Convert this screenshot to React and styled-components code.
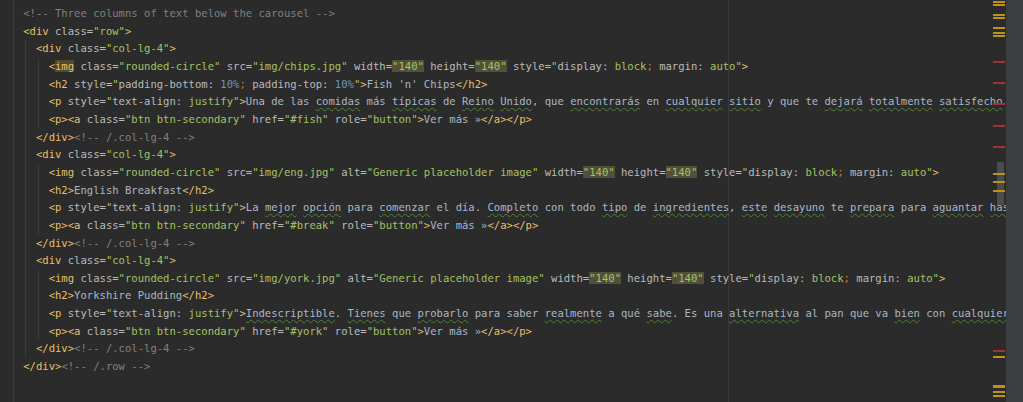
import React from 'react'
import styled, { createGlobalStyle, css } from 'styled-components'


const palette = {
    t: '#e8bf6a',   // tags
    H: '#e8bf6a',
    a: '#bababa',   // attribute names, css props
    v: '#a5c261',   // attribute values
    h: '#a5c261',
    x: '#a9b7c6',   // plain text
    s: '#a9b7c6',
    c: '#808080',   // comments
    n: '#6897bb',   // numbers
    o: '#cc7832',   // semicolons
}

const GlobalStyle = createGlobalStyle`
    html, body {
        margin: 0;
        padding: 0;
        background: #2b2b2b;
        overflow: hidden;
    }
`

const Window = styled.div`
    display: flex;
    width: 100vw;
    height: 100vh;
    overflow: hidden;
    background: #2b2b2b;
`

const Editor = styled.div`
    position: relative;
    flex: 1;
    min-width: 0;
    overflow: hidden;
    background: linear-gradient(to right, transparent 728px, #393939 728px, #393939 729px, transparent 729px);
`

const Code = styled.pre`
    margin: -12.45px 0 0;
    padding: 0 0 0 10.5px;
    font-family: "DejaVu Sans Mono", "Liberation Mono", monospace;
    font-size: 10.57px;
    line-height: 17.65px;
    color: #a9b7c6;
    white-space: pre;
`

const Line = styled.div`
    height: 17.65px;
`

const Indent = styled.span`
    display: inline-block;
    height: 17.65px;
    vertical-align: top;
    background: linear-gradient(to right, transparent 2px, #3b3b3b 2px, #3b3b3b 3px, transparent 3px);
`

const Tok = styled.span`
    color: ${p => palette[p.$k]};
    ${p => p.$k === 'h' && css`background: #52503a;`}
    ${p => p.$k === 'H' && css`background: #4e4a33;`}
    ${p => p.$k === 's' && css`
        text-decoration: underline wavy #55803a;
        text-decoration-thickness: 1px;
        text-underline-offset: 2px;
    `}
`

const Stripe = styled.div`
    position: absolute;
    top: 0;
    right: 0;
    bottom: 0;
    width: 13px;
`

const Thumb = styled.div`
    position: absolute;
    top: 162px;
    left: 4px;
    width: 7px;
    height: 43px;
    background: #4a4c4e;
`

const Mark = styled.div`
    position: absolute;
    left: 0;
    width: 12px;
    top: ${p => p.$top}px;
    height: ${p => p.$h || 2}px;
    background: ${p => p.$red ? '#a3332f' : '#be9117'};
`

const ScrollTrack = styled.div`
    flex: none;
    width: 17px;
    background: #3c3f41;
`


// text with ~words~ flagged by the spell checker
const prose = str => str.split(/(~[^~]+~)/).filter(Boolean).map(part =>
    part.startsWith('~') ? ['s', part.slice(1, -1)] : ['x', part]
)

const img = (file, alt, caret) => [
    ['t', '<'], [caret ? 'H' : 't', 'img'],
    ['a', ' class='], ['v', '"rounded-circle"'],
    ['a', ' src='], ['v', `"img/${file}"`],
    ...(alt ? [['a', ' alt='], ['v', '"Generic placeholder image"']] : []),
    ['a', ' width='], ['h', '"140"'],
    ['a', ' height='], ['h', '"140"'],
    ['a', ' style='], ['v', '"'], ['a', 'display: '], ['v', 'block'], ['o', ';'],
    ['a', ' margin: '], ['v', 'auto'], ['v', '"'], ['t', '>'],
]

const justified = text => [
    ['t', '<p'], ['a', ' style='], ['v', '"'], ['a', 'text-align: '], ['v', 'justify'], ['v', '"'], ['t', '>'],
    ...prose(text),
    ['t', '</p>'],
]

const button = href => [
    ['t', '<p><a'], ['a', ' class='], ['v', '"btn btn-secondary"'],
    ['a', ' href='], ['v', `"${href}"`], ['a', ' role='], ['v', '"button"'], ['t', '>'],
    ['x', 'Ver más »'], ['t', '</a></p>'],
]

const openCol = [['t', '<div'], ['a', ' class='], ['v', '"col-lg-4"'], ['t', '>']]
const closeCol = [['t', '</div>'], ['c', '<!-- /.col-lg-4 -->']]
const h2 = title => [['t', '<h2>'], ['x', title], ['t', '</h2>']]

const lines = [
    [1, []],
    [1, [['c', '<!-- Three columns of text below the carousel -->']]],
    [1, [['t', '<div'], ['a', ' class='], ['v', '"row"'], ['t', '>']]],
    [2, openCol],
    [3, img('chips.jpg', false, true)],
    [3, [
        ['t', '<h2'], ['a', ' style='], ['v', '"'], ['a', 'padding-bottom: '], ['n', '10%'], ['o', ';'],
        ['a', ' padding-top: '], ['n', '10%'], ['v', '"'], ['t', '>'], ['x', "Fish 'n' Chips"], ['t', '</h2>'],
    ]],
    [3, justified('Una de las ~comidas~ más ~típicas~ de ~Reino~ ~Unido~, que ~encontrarás~ en ~cualquier~ ~sitio~ y que te ~dejará~ ~totalmente~ ~satisfecho~ tras comerlo.')],
    [3, button('#fish')],
    [2, closeCol],
    [2, openCol],
    [3, img('eng.jpg', true)],
    [3, h2('English Breakfast')],
    [3, justified('La ~mejor~ ~opción~ para ~comenzar~ el día. ~Completo~ con todo ~tipo~ de ~ingredientes~, ~este~ ~desayuno~ te ~prepara~ para ~aguantar~ ~hasta~ la ~comida~.')],
    [3, button('#break')],
    [2, closeCol],
    [2, openCol],
    [3, img('york.jpg', true)],
    [3, h2('Yorkshire Pudding')],
    [3, justified('~Indescriptible~. ~Tienes~ que ~probarlo~ para saber ~realmente~ a qué ~sabe~. Es una ~alternativa~ al pan que va ~bien~ con ~cualquier~ ~plato~.')],
    [3, button('#york')],
    [2, closeCol],
    [1, [['t', '</div>'], ['c', '<!-- /.row -->']]],
    [1, []],
    [1, []],
]

const marks = [
    { top: 1 }, { top: 3.5 },
    { top: 14 }, { top: 17 },
    { top: 27 },
    { top: 32 }, { top: 35 },
    { top: 61, red: true }, { top: 82, red: true }, { top: 103, red: true },
    { top: 125, red: true }, { top: 146, red: true },
    { top: 172.5 }, { top: 181 }, { top: 190 },
    { top: 350, red: true }, { top: 356 },
    { top: 385, h: 3 }, { top: 391 }, { top: 395 },
]


const App = () => (
    <>
        <GlobalStyle />
        <Window>
            <Editor>
                <Code>
                    {lines.map(([depth, segs], i) => (
                        <Line key={i}>
                            {Array.from({ length: depth }, (_, d) => <Indent key={d}>{'  '}</Indent>)}
                            {segs.map(([k, text], j) => <Tok key={j} $k={k}>{text}</Tok>)}
                        </Line>
                    ))}
                </Code>
                <Stripe>
                    <Thumb />
                    {marks.map((m, i) => <Mark key={i} $top={m.top} $h={m.h} $red={m.red} />)}
                </Stripe>
            </Editor>
            <ScrollTrack />
        </Window>
    </>
)

export default App
